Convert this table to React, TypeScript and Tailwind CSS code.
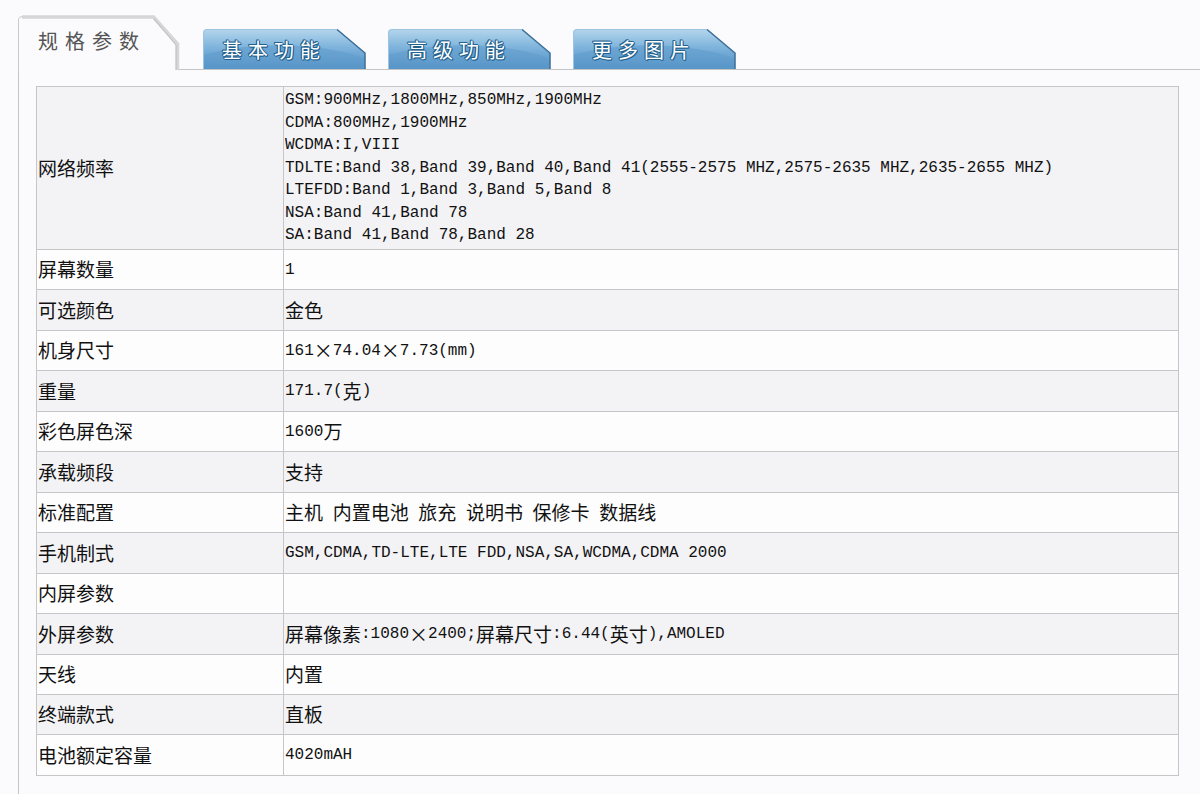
import React from 'react';

const network = [
    'GSM:900MHz,1800MHz,850MHz,1900MHz',
    'CDMA:800MHz,1900MHz',
    'WCDMA:I,VIII',
    'TDLTE:Band 38,Band 39,Band 40,Band 41(2555-2575 MHZ,2575-2635 MHZ,2635-2655 MHZ)',
    'LTEFDD:Band 1,Band 3,Band 5,Band 8',
    'NSA:Band 41,Band 78',
    'SA:Band 41,Band 78,Band 28',
];

const specs = [
    { label: '屏幕数量', value: '1' },
    { label: '可选颜色', value: '金色' },
    { label: '机身尺寸', value: '161×74.04×7.73(mm)' },
    { label: '重量', value: '171.7(克)' },
    { label: '彩色屏色深', value: '1600万' },
    { label: '承载频段', value: '支持' },
    { label: '标准配置', value: '主机 内置电池 旅充 说明书 保修卡 数据线' },
    { label: '手机制式', value: 'GSM,CDMA,TD-LTE,LTE FDD,NSA,SA,WCDMA,CDMA 2000' },
    { label: '内屏参数', value: '' },
    { label: '外屏参数', value: '屏幕像素:1080×2400;屏幕尺寸:6.44(英寸),AMOLED' },
    { label: '天线', value: '内置' },
    { label: '终端款式', value: '直板' },
    { label: '电池额定容量', value: '4020mAH' },
];

const tabs = ['基本功能', '高级功能', '更多图片'];

// wide glyphs get the CJK face at a bigger size, ascii stays mono
function Mixed({ text }: { text: string }) {
    const parts = text.split(/([\u2E80-\u9FFF\uFF00-\uFFEF×]+)/);
    return (
        <>
            {parts.map((p, i) =>
                /[\u2E80-\u9FFF\uFF00-\uFFEF×]/.test(p) ? (
                    <span key={i} className="font-['Noto_Sans_CJK_SC',sans-serif] text-[19px]">
                        {p}
                    </span>
                ) : (
                    <span key={i}>{p}</span>
                )
            )}
        </>
    );
}

function BlueTab({ label }: { label: string }) {
    return (
        <div className="relative w-[163px] h-[40px] flex items-center pl-[19px] pt-[2px]">
            <svg className="absolute inset-0" width="163" height="40" viewBox="0 0 163 40">
                <defs>
                    <linearGradient id="tabg" x1="0" y1="0" x2="0" y2="1">
                        <stop offset="0" stopColor="#b5d6ec" />
                        <stop offset="0.45" stopColor="#7fb4dc" />
                        <stop offset="1" stopColor="#4f8fc3" />
                    </linearGradient>
                </defs>
                <path d="M0 40 V4 Q0 0 4 0 H134 L162 24 V40 Z" fill="url(#tabg)" />
                <path d="M0 40 V26 Q50 12 110 18 Q140 21 162 30 V40 Z" fill="#5e9bcc" opacity="0.55" />
                <path d="M134 0.5 L162 24 V40" fill="none" stroke="#3c6f99" strokeWidth="1.5" />
                <path d="M0.5 40 V4 Q0.5 0.5 4 0.5 H134" fill="none" stroke="#9cc3df" strokeWidth="1" />
            </svg>
            <span className="relative font-['Noto_Sans_CJK_SC',sans-serif] text-[20px] leading-none tracking-[6px] text-white [text-shadow:1px_0_#23618f,-1px_0_#23618f,0_1px_#23618f,0_-1px_#23618f,1px_1px_#23618f,-1px_-1px_#23618f]">
                {label}
            </span>
        </div>
    );
}

export default function App() {
    return (
        <div className="w-[1200px] h-[794px] overflow-hidden bg-[#fbfbfd] text-[#111]">
            {/* tabs */}
            <div className="ml-[18px] pt-[15px] flex items-end gap-[22px] border-b border-[#c4c4c4]">
                <div className="relative w-[163px] h-[55px] -mb-px z-10 flex items-center pl-[20px] pb-[4px]">
                    <svg className="absolute inset-0" width="163" height="55" viewBox="0 0 163 55">
                        <path d="M0.5 55 V5 Q0.5 1.5 5 1.5 H136 L159 28 V55" fill="#fbfbfd" stroke="#c9c9c9" strokeWidth="1" />
                        <path d="M4 2 H135.5 L159.5 29 V55" fill="none" stroke="#d6d6d8" strokeWidth="3.5" />
                        <path d="M136 4 L158 30 V55" fill="none" stroke="#bcbcbe" strokeWidth="1" />
                    </svg>
                    <span className="relative font-['Noto_Sans_CJK_SC',sans-serif] text-[20px] leading-none tracking-[7px] text-[#555]">
                        规格参数
                    </span>
                </div>
                {tabs.map((t) => (
                    <BlueTab key={t} label={t} />
                ))}
            </div>

            {/* panel */}
            <div className="ml-[18px] h-[725px] border-l border-b border-[#c4c4c4] pl-[17px] pt-[16px]">
                <div className="w-[1143px] border border-[#c6c6c8] font-['Liberation_Mono','Noto_Sans_CJK_SC',monospace] text-[16px]">
                    <div className="flex h-[162px] bg-[#f3f3f6]">
                        <div className="w-[247px] border-r border-[#c6c6c8] flex items-center pl-[1px] font-['Noto_Sans_CJK_SC',sans-serif] text-[19px]">
                            网络频率
                        </div>
                        <div className="flex-1 pl-[1px] pt-[2px] leading-[22.5px] whitespace-pre">
                            {network.map((l) => (
                                <div key={l}>{l}</div>
                            ))}
                        </div>
                    </div>
                    {specs.map((s, i) => (
                        <div
                            key={s.label}
                            className={
                                'flex h-[40.46px] border-t border-[#c6c6c8] ' +
                                (i % 2 === 1 ? 'bg-[#f3f3f6]' : 'bg-[#fdfdfe]')
                            }
                        >
                            <div className="w-[247px] border-r border-[#c6c6c8] flex items-center pl-[1px] font-['Noto_Sans_CJK_SC',sans-serif] text-[19px]">
                                {s.label}
                            </div>
                            <div className="flex-1 flex items-center pl-[1px] whitespace-pre">
                                <Mixed text={s.value} />
                            </div>
                        </div>
                    ))}
                </div>
            </div>
        </div>
    );
}
